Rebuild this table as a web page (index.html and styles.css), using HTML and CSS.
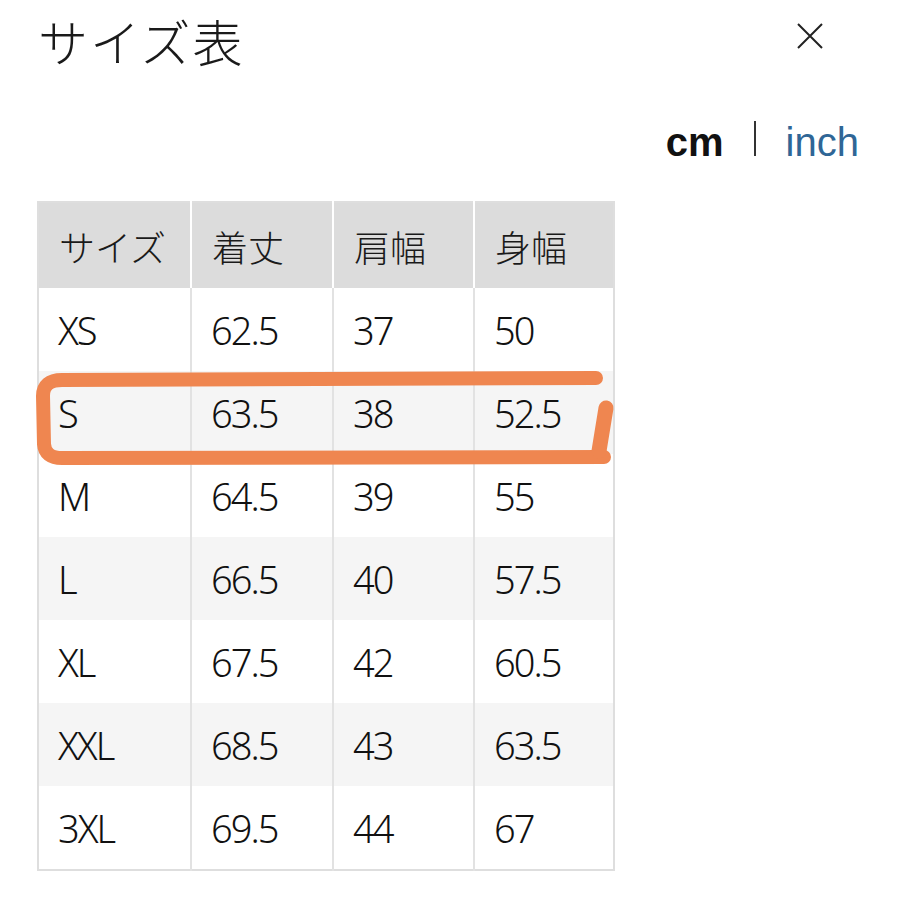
FILE: index.html
```html
<!DOCTYPE html>
<html lang="ja">
<head>
<meta charset="utf-8">
<link rel="stylesheet" href="styles.css">
</head>
<body>
<div class="page">
  <div class="top">
    <h1 class="title">サイズ表</h1>
    <svg class="close" width="28" height="28" viewBox="0 0 28 28"><path d="M2 2 L26 26 M26 2 L2 26" stroke="#222" stroke-width="2" fill="none"/></svg>
  </div>
  <div class="units">
    <span class="cm">cm</span>
    <span class="sep"></span>
    <span class="inch">inch</span>
  </div>
  <table class="size">
    <colgroup>
      <col class="c1"><col class="c2"><col class="c3"><col class="c4">
    </colgroup>
    <thead>
      <tr><th>サイズ</th><th>着丈</th><th>肩幅</th><th>身幅</th></tr>
    </thead>
    <tbody>
      <tr><td>XS</td><td>62.5</td><td>37</td><td>50</td></tr>
      <tr class="alt"><td>S</td><td>63.5</td><td>38</td><td>52.5</td></tr>
      <tr><td>M</td><td>64.5</td><td>39</td><td>55</td></tr>
      <tr class="alt"><td>L</td><td>66.5</td><td>40</td><td>57.5</td></tr>
      <tr><td>XL</td><td>67.5</td><td>42</td><td>60.5</td></tr>
      <tr class="alt"><td>XXL</td><td>68.5</td><td>43</td><td>63.5</td></tr>
      <tr><td>3XL</td><td>69.5</td><td>44</td><td>67</td></tr>
    </tbody>
  </table>
  <svg class="mark" width="900" height="900" viewBox="0 0 900 900">
    <path d="M596 378 L62 380 Q43 380 43 396 L44 444 Q45 458 62 458 L604 457" stroke="#ef8650" stroke-width="14" fill="none" stroke-linecap="round" stroke-linejoin="round"/>
    <path d="M606 408 L599 451" stroke="#ef8650" stroke-width="15" fill="none" stroke-linecap="round"/>
  </svg>
</div>
</body>
</html>
```
FILE: styles.css
```css
html, body {
  margin: 0;
  padding: 0;
  background: #fff;
}
.page {
  position: relative;
  width: 900px;
  height: 900px;
  font-family: "Noto Sans CJK JP", "Liberation Sans", sans-serif;
  color: #1a1a1a;
}
.top {
  display: flex;
  justify-content: space-between;
  align-items: flex-start;
  padding: 8px 76px 0 38px;
}
.title {
  margin: 0;
  font-size: 50px;
  font-weight: 300;
  line-height: 64px;
  letter-spacing: 2px;
}
.close {
  margin-top: 14px;
}
.units {
  display: flex;
  justify-content: flex-end;
  align-items: center;
  padding-right: 41px;
  margin-top: 46px;
  height: 48px;
  font-family: "Liberation Sans", Arial, sans-serif;
}
.cm {
  font-size: 40px;
  font-weight: 700;
  color: #111;
}
.sep {
  display: block;
  width: 2px;
  height: 35px;
  background: #333;
  margin: -8px 30px 0 30px;
}
.inch {
  font-size: 40px;
  color: #2f6696;
}
.size {
  margin: 35px 0 0 37px;
  border-collapse: collapse;
  border: 2px solid #dedede;
  width: 576px;
  table-layout: fixed;
}
.c1 { width: 153px; }
.c2 { width: 142px; }
.c3 { width: 141px; }
.c4 { width: 140px; }
.size th, .size td {
  text-align: left;
  padding: 0 0 0 20px;
  white-space: nowrap;
}
.size th {
  height: 85px;
  background: #dcdcdc;
  font-size: 36px;
  font-weight: 300;
  border-left: 2px solid #fff;
  color: #1a1a1a;
}
.size th:first-child { border-left: none; }
.size td {
  height: 83px;
  padding-left: 19px;
  font-family: "Noto Sans", "Liberation Sans", sans-serif;
  font-weight: 300;
  font-size: 38px;
  letter-spacing: -2px;
  color: #111;
  border-left: 2px solid #e2e2e2;
}
.size td:first-child { border-left: none; }
.size tr.alt td { background: #f5f5f5; }
.mark {
  position: absolute;
  left: 0;
  top: 0;
  pointer-events: none;
}
```
